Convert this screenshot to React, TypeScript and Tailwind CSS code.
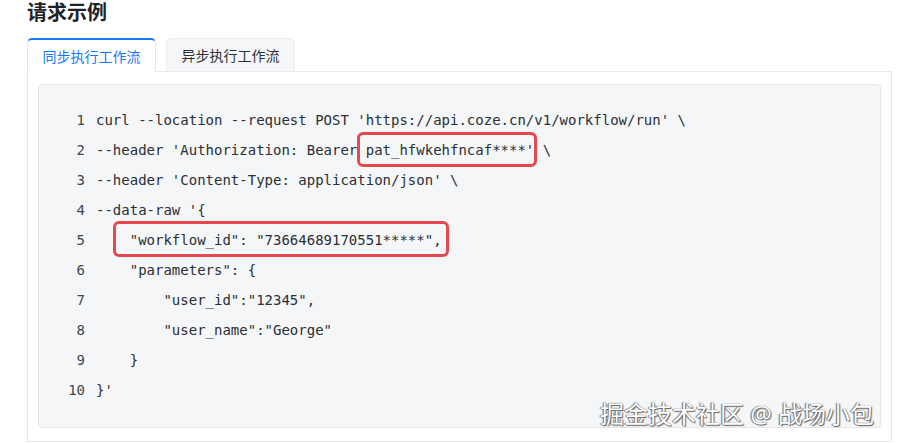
import React from 'react';

const mono = { fontFamily: '"DejaVu Sans Mono", "Liberation Mono", monospace' };

type Line = { indent: number; text: React.ReactNode };

// red annotation box drawn over a piece of code
const Marked: React.FC<{ children: React.ReactNode; box: string }> = ({ children, box }) => (
  <span className="relative">
    {children}
    <span className={`absolute border-[3px] border-[#e5484d] rounded-[6px] pointer-events-none ${box}`}></span>
  </span>
);

const lines: Line[] = [
  { indent: 0, text: "curl --location --request POST 'https://api.coze.cn/v1/workflow/run' \\" },
  {
    indent: 0,
    text: (
      <>
        {"--header 'Authorization: Bearer "}
        <Marked box="-left-[9px] -right-[3px] -top-[10px] -bottom-[9px]">{"pat_hfwkehfncaf****'"}</Marked>
        {' \\'}
      </>
    ),
  },
  { indent: 0, text: "--header 'Content-Type: application/json' \\" },
  { indent: 0, text: "--data-raw '{" },
  {
    indent: 4,
    text: <Marked box="-left-[17px] -right-[7px] -top-[11px] -bottom-[9px]">{'"workflow_id": "73664689170551*****",'}</Marked>,
  },
  { indent: 4, text: '"parameters": {' },
  { indent: 8, text: '"user_id":"12345",' },
  { indent: 8, text: '"user_name":"George"' },
  { indent: 4, text: '}' },
  { indent: 0, text: "}'" },
];

export default function App() {
  return (
    <div
      className="relative w-[901px] h-[444px] overflow-hidden bg-white pl-[27px]"
      style={{ fontFamily: '"Noto Sans", "Noto Sans CJK SC", sans-serif' }}
    >
      <h3 className="text-[20px] leading-[26px] font-semibold text-[#1f2329]">请求示例</h3>

      {/* Tabs */}
      <div className="mt-[12px] flex items-end gap-[10px]">
        <div className="relative z-10 -mb-px flex h-[34px] w-[129px] items-center justify-center rounded-t-[5px] border border-b-0 border-[#e5e6eb] border-t-2 border-t-[#1677ff] bg-white text-[14px] text-[#1677ff]">
          同步执行工作流
        </div>
        <div className="flex h-[33px] w-[129px] items-center justify-center rounded-t-[5px] border border-b-0 border-[#ebedf0] bg-[#f5f6f7] text-[14px] text-[#2b2f36]">
          异步执行工作流
        </div>
      </div>

      {/* Panel */}
      <div className="w-[865px] border border-[#e8e9ec] px-[10px] pt-[12px] pb-[13px]">
        <div className="h-[344px] rounded-[4px] border border-[#e3e5e8] bg-[#f5f6f7] pt-[20px]" style={mono}>
          {lines.map((l, i) => (
            <div key={i} className="flex h-[30px] items-center text-[14px] whitespace-pre">
              <span className="w-[46px] text-right text-[#41464f]">{i + 1}</span>
              <span className="ml-[11px] text-[#2b2f36]">
                {' '.repeat(l.indent)}
                {l.text}
              </span>
            </div>
          ))}
        </div>
      </div>

      {/* Watermark */}
      <div
        className="absolute left-[600px] top-[398px] text-[24px] leading-[32px] text-white"
        style={{ textShadow: '0 0 1px #555, 1px 1px 1px #666, -1px 0 1px #777' }}
      >
        掘金技术社区 @ 战场小包
      </div>
    </div>
  );
}
